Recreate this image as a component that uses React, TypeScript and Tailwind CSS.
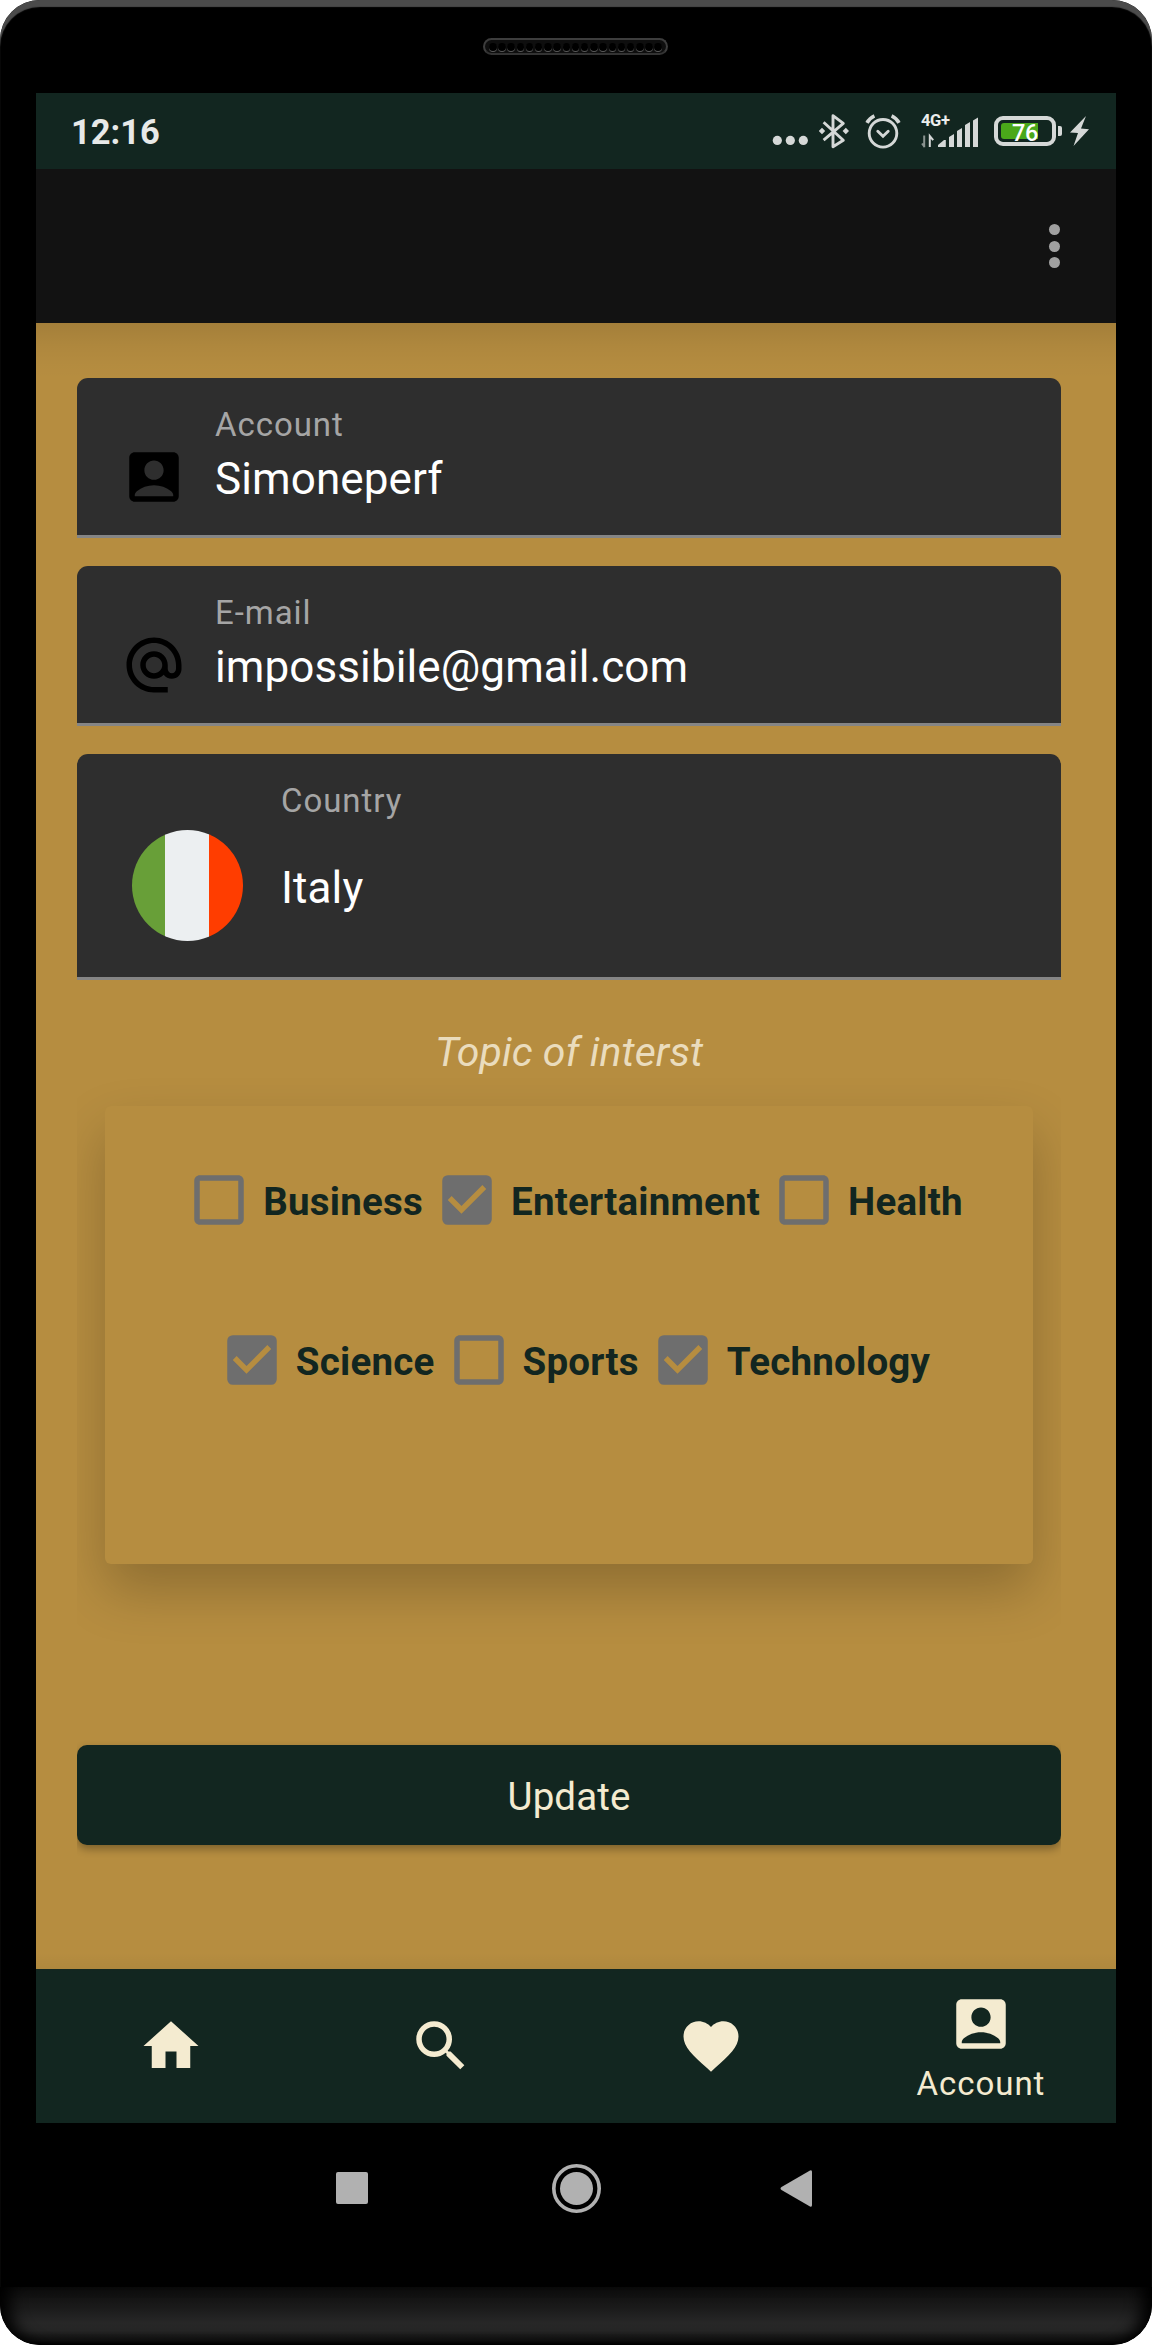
import React from "react";
import {
  MdAlternateEmail,
  MdCheckBox,
  MdCheckBoxOutlineBlank,
  MdFavorite,
  MdSearch,
} from "react-icons/md";

function AccountIcon({ className }: { className?: string }) {
  return (
    <svg viewBox="0 0 24 24" className={className} fill="currentColor">
      <path d="M19 3H5c-1.1 0-2 .9-2 2v14c0 1.1.9 2 2 2h14c1.1 0 2-.9 2-2V5c0-1.1-.9-2-2-2zm-7 3c1.93 0 3.5 1.57 3.5 3.5S13.93 13 12 13s-3.5-1.57-3.5-3.5S10.07 6 12 6zm7 13H5v-.23c0-.62.28-1.2.76-1.58C7.47 15.82 9.64 15 12 15s4.53.82 6.24 2.19c.48.38.76.97.76 1.58V19z" />
    </svg>
  );
}

function HomeIcon({ className }: { className?: string }) {
  return (
    <svg viewBox="0 0 24 24" className={className} fill="currentColor">
      <path d="M10 20v-6h4v6h5v-8h3L12 3 2 12h3v8z" />
    </svg>
  );
}

function Speaker() {
  return (
    <div className="ml-[483px] mt-[38px] flex h-[17px] w-[185px] items-center justify-center gap-[1.8px] rounded-full border-2 border-[#3d3d3d] border-b-[#333] bg-[#0e0e0e]">
      {Array.from({ length: 19 }, (_, i) => (
        <span
          key={i}
          className="h-[8px] w-[7.4px] rounded-full bg-black shadow-[0_1px_0_#5a5a5a]"
        />
      ))}
    </div>
  );
}

function StatusBar() {
  return (
    <div className="flex h-[76px] items-start bg-[#122620] text-[#d5d8d7]">
      <span className="ml-[35px] mt-[19px] text-[34.5px] leading-[40px] font-bold text-[#e7e9e8]">
        12:16
      </span>
      <div className="ml-auto mr-[27px] flex pt-[19px]">
        <svg className="h-[38px] w-[36px]" viewBox="0 0 36 38" fill="currentColor">
          <circle cx="5.3" cy="28.4" r="4.6" />
          <circle cx="18.3" cy="28.4" r="4.6" />
          <circle cx="31.3" cy="28.4" r="4.6" />
        </svg>
        <svg className="ml-[11px] h-[38px] w-[31px]" viewBox="0 0 31 38" fill="none" stroke="currentColor" strokeWidth="2.9">
          <path d="M4.6 10.5 L24.3 28.5 L14 35 V4 L24.3 11.7 L4.6 28.5" transform="translate(0 -.3)" strokeLinejoin="round" />
          <path d="M3 15.8 l3.2 3.2 -3.2 3.2 -3.2 -3.2z M26.8 15.8 l3.2 3.2 -3.2 3.2 -3.2 -3.2z" fill="currentColor" stroke="none" />
        </svg>
        <svg className="ml-[15px] h-[38px] w-[36px]" viewBox="0 0 36 38" fill="none" stroke="currentColor" strokeWidth="2.9" strokeLinecap="round">
          <circle cx="18" cy="21.3" r="13.8" />
          <path d="M12.8 19.2 l5.2 5 5.2 -5" strokeLinejoin="miter" />
          <path d="M2 10.8 Q4.6 6 9.4 3.8 M34 10.8 Q31.4 6 26.6 3.8" strokeLinecap="butt" strokeWidth="3.6" />
        </svg>
        <div className="ml-[20px] flex h-[38px] w-[58px] flex-col">
          <span className="mt-[1px] h-[15px] text-[16.5px] leading-[15px] font-bold tracking-[-0.4px] text-[#eceeed]">
            4G+
          </span>
          <svg className="mt-[-13px] h-[34px] w-[58px]" viewBox="0 0 58 34" fill="currentColor">
            <path d="M3.2 20.5v11.8 M1 28.5l2.6 3.5" stroke="#8a9390" strokeWidth="2" fill="none" />
            <path d="M8.8 32V21 l3.4 4.2" stroke="currentColor" strokeWidth="2" fill="none" />
            <path d="M17 32v-2l6-5h1.8v7z" />
            <path d="M28 32V22l5-3v13z M36 32V16l5-3v19z M44 32V10l5-3v25z M52 32V5.500l5-3v29.500z" />
          </svg>
        </div>
        <div className="ml-[15px] mt-[4px] flex h-[30px] w-[62px] items-center rounded-[9px] border-[4.500px] border-current">
          <div className="ml-[3px] flex h-[16px] w-[37px] items-center justify-end rounded-l-[3px] bg-[#4aa81a]">
            <span className="mt-[3px] text-[23.500px] leading-[16px] font-medium tracking-[-0.3px] text-white">76</span>
          </div>
        </div>
        <div className="ml-[2px] mt-[14px] h-[10px] w-[4px] rounded-r-[2px] bg-current" />
        <svg className="ml-[8px] mt-[4px] h-[30px] w-[19px]" viewBox="0 0 19 30" fill="currentColor">
          <path d="M16 0 L0 16.500 L8 17 L3.500 30 L19 13.200 L11 12.500z" />
        </svg>
      </div>
    </div>
  );
}

function Toolbar() {
  return (
    <div className="flex h-[154px] flex-col items-end justify-center gap-[5.500px] bg-[#121212] pr-[56px]">
      <span className="size-[11px] rounded-full bg-[#a0a0a0]" />
      <span className="size-[11px] rounded-full bg-[#a0a0a0]" />
      <span className="size-[11px] rounded-full bg-[#a0a0a0]" />
    </div>
  );
}

type FieldProps = {
  icon: React.ReactNode;
  label: string;
  value: string;
  tall?: boolean;
};

function Field({ icon, label, value, tall }: FieldProps) {
  return (
    <div
      className={`flex rounded-t-[11px] border-b-[3px] border-[#858585] bg-[#2e2e2e] ${
        tall ? "h-[226px] pl-[55px]" : "h-[160px] pl-[44px]"
      }`}
    >
      {icon}
      <div className={`flex flex-col pt-[26.500px] ${tall ? "ml-[38px]" : "ml-[28px]"}`}>
        <span className="text-[33px] leading-[40px] tracking-[0.95px] text-[#a5a5a5]">{label}</span>
        <span
          className={`text-[44px] leading-[52px] tracking-[0.1px] text-white ${
            tall ? "mt-[41px]" : "mt-[8.500px]"
          }`}
        >
          {value}
        </span>
      </div>
    </div>
  );
}

function ItalyFlag() {
  return (
    <div className="mt-[76px] flex size-[111px] overflow-hidden rounded-full">
      <div className="w-[33px] bg-[#689f38]" />
      <div className="w-[44px] bg-[#eceff1]" />
      <div className="flex-1 bg-[#ff3d00]" />
    </div>
  );
}

function Topic({ label, checked }: { label: string; checked?: boolean }) {
  const Icon = checked ? MdCheckBox : MdCheckBoxOutlineBlank;
  return (
    <div className="flex items-center">
      <div className="flex w-[88px] justify-center">
        <Icon className="size-[66px] text-[#6e6e6e]" />
      </div>
      <span className="pt-[3px] text-[38.500px] leading-[46px] font-bold tracking-[0.22px] text-[#122620]">
        {label}
      </span>
    </div>
  );
}

function NavItem({ children, label }: { children: React.ReactNode; label?: string }) {
  return (
    <div className="flex flex-1 flex-col items-center justify-center text-[#f4ebd0]">
      {children}
      {label && (
        <span className="mt-[7px] mb-[-3px] text-[33px] leading-[40px] tracking-[0.95px]">{label}</span>
      )}
    </div>
  );
}

export default function App() {
  return (
    <div className="h-[2345px] w-[1152px] bg-white font-[Roboto,sans-serif]">
      <div className="flex h-full flex-col overflow-hidden rounded-[40px] bg-black shadow-[inset_0_7px_1px_#4b4b4b]">
        <div className="h-[93px] shrink-0">
          <Speaker />
        </div>

        <div className="mx-[36px] flex h-[2030px] shrink-0 flex-col">
          <StatusBar />
          <Toolbar />

          <main className="flex h-[1646px] flex-col bg-[#b68d40] bg-[linear-gradient(to_bottom,rgba(0,0,0,0.1),rgba(0,0,0,0.045)_22px,rgba(0,0,0,0.01)_42px,transparent_56px,transparent_calc(100%-16px),rgba(0,0,0,0.04))] pt-[55px]">
            <div className="mr-[55px] ml-[41px] flex flex-col">
              <div className="flex flex-col gap-[28px]">
                <Field
                  icon={<AccountIcon className="mt-[66px] size-[66px] text-black" />}
                  label="Account"
                  value="Simoneperf"
                />
                <Field
                  icon={<MdAlternateEmail className="mt-[66px] size-[66px] text-black" />}
                  label="E-mail"
                  value="impossibile@gmail.com"
                />
                <Field icon={<ItalyFlag />} label="Country" value="Italy" tall />
              </div>

              <h2 className="mt-[48px] text-center text-[41px] leading-[48px] tracking-[0.1px] text-[#eadcbd] italic">
                Topic of interst
              </h2>

              <div className="h-[609px] overflow-hidden px-[28px] pt-[30px]">
                <div className="flex h-[458px] flex-col items-center gap-[94px] rounded-[6px] bg-[#b68d40] pt-[61px] shadow-[0_26px_54px_rgba(0,0,0,0.22)]">
                  <div className="flex">
                    <Topic label="Business" />
                    <Topic label="Entertainment" checked />
                    <Topic label="Health" />
                  </div>
                  <div className="flex">
                    <Topic label="Science" checked />
                    <Topic label="Sports" />
                    <Topic label="Technology" checked />
                  </div>
                </div>
              </div>

              <div className="h-[180px] overflow-hidden pt-[60px]">
                <button
                  type="button"
                  className="block h-[100px] w-full rounded-[10px] bg-[#122620] pt-[3px] text-[38.500px] leading-[46px] tracking-[0.1px] text-[#f4ebd0] shadow-[0_4px_8px_rgba(0,0,0,0.32)]"
                >
                  Update
                </button>
              </div>
            </div>
          </main>

          <nav className="flex h-[154px] bg-[#122620]">
            <NavItem>
              <HomeIcon className="size-[66px]" />
            </NavItem>
            <NavItem>
              <MdSearch className="size-[66px]" />
            </NavItem>
            <NavItem>
              <MdFavorite className="size-[66px]" />
            </NavItem>
            <NavItem label="Account">
              <AccountIcon className="size-[66px]" />
            </NavItem>
          </nav>
        </div>

        <div className="flex h-[164px] shrink-0 items-start text-[#b1b1b1]">
          <div className="mt-[49px] ml-[336px] h-[32px] w-[32px] rounded-[2px] bg-current" />
          <svg className="mt-[41px] ml-[184px] size-[49px]" viewBox="0 0 49 49">
            <circle cx="24.500" cy="24.500" r="22.700" fill="none" stroke="currentColor" strokeWidth="3.600" />
            <circle cx="24.500" cy="24.500" r="16.500" fill="currentColor" />
          </svg>
          <svg className="mt-[47px] ml-[179px] h-[37px] w-[32px]" viewBox="0 0 32 37" fill="currentColor">
            <path d="M30 .6 Q32 -.4 32 2 V35 Q32 37.400 30 36.400 L1.500 20 Q-.5 18.500 1.500 17z" />
          </svg>
        </div>

        <div className="h-[58px] shrink-0 rounded-b-[40px] bg-[linear-gradient(to_bottom,#0d0d0d,#1a1a1a_35%,#272727_62%,#252525_75%,#101010_92%,#000)] shadow-[inset_18px_0_16px_-8px_#000,inset_-18px_0_16px_-8px_#000]" />
      </div>
    </div>
  );
}
